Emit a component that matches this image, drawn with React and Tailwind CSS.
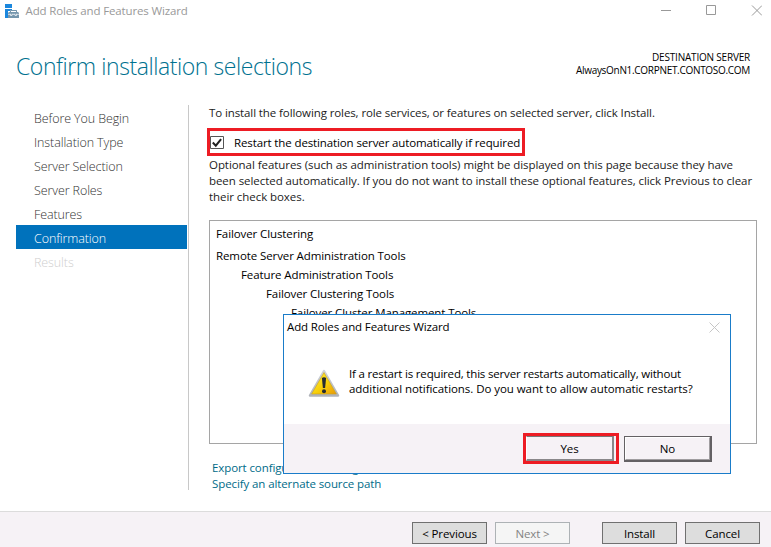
import React from 'react';

const steps = [
  { label: 'Before You Begin', cls: 'text-[#333]' },
  { label: 'Installation Type', cls: 'text-[#333]' },
  { label: 'Server Selection', cls: 'text-[#333]' },
  { label: 'Server Roles', cls: 'text-[#333]' },
  { label: 'Features', cls: 'text-[#333]' },
  { label: 'Confirmation', cls: 'bg-[#0072bc] text-white' },
  { label: 'Results', cls: 'text-[#cfcfcf]' },
];

const features = [
  { label: 'Failover Clustering', cls: 'mb-[3px]' },
  { label: 'Remote Server Administration Tools', cls: '' },
  { label: 'Feature Administration Tools', cls: 'pl-[25px]' },
  { label: 'Failover Clustering Tools', cls: 'pl-[50px]' },
  { label: 'Failover Cluster Management Tools', cls: 'pl-[75px]' },
];

function ServerManagerIcon() {
  return (
    <svg className="shrink-0" width="14" height="14" viewBox="0 0 14 14">
      <path d="M0 0h7v4H0zM0 5h7v1H5v1H3v7H0z" fill="#1b87dd" />
      <path fillRule="evenodd" d="M5 8V6.500L5.500 6h6l.5.500V8h1l1 1v5H3V9l1-1zM6 7v1h5V7z" fill="#7596ad" />
      <path d="M3 10.300h2.500M7 10.300h3M11.500 10.300H14M5.500 9.800v1.700H7V9.800M10 9.800v1.700h1.500V9.800" fill="none" stroke="#fff" strokeWidth="0.700" />
    </svg>
  );
}

function WarningIcon() {
  return (
    <svg width="32" height="29" viewBox="0 0 32 29">
      <defs>
        <linearGradient id="rim" x1="0" y1="0" x2="0" y2="1">
          <stop offset="0" stopColor="#d0d3d9" />
          <stop offset="1" stopColor="#b0b3ba" />
        </linearGradient>
        <linearGradient id="amber" x1="0" y1="0" x2="1" y2="1">
          <stop offset="0" stopColor="#fff04a" />
          <stop offset="0.55" stopColor="#f8d008" />
          <stop offset="1" stopColor="#e8980a" />
        </linearGradient>
      </defs>
      <path d="M16 2 30 26.500H2z" fill="url(#rim)" stroke="url(#rim)" strokeWidth="2.500" strokeLinejoin="round" />
      <path d="M16 3.600 28.400 25H3.600z" fill="url(#amber)" stroke="#c9a21c" strokeWidth="0.600" />
      <path d="M13.900 9q2.100-1.300 4.200 0l-1 10h-2.200z" fill="#252b33" />
      <circle cx="16" cy="22.300" r="2" fill="#252b33" />
    </svg>
  );
}

function WizardButton({ children, cls }) {
  return (
    <button className={`flex h-[22px] w-[75px] items-center justify-center border pt-px leading-4 tracking-[-0.12px] ${cls}`}>
      {children}
    </button>
  );
}

function ConfirmDialog() {
  return (
    <div className="absolute left-[283px] top-[314px] flex h-[160px] w-[448px] flex-col border border-[#1a7cc9] bg-white text-black">
      <div className="flex h-[24px] items-center justify-between pl-[3px] pr-[10px]">
        <span className="whitespace-nowrap tracking-[-0.13px]">Add Roles and Features Wizard</span>
        <svg width="11" height="11" viewBox="0 0 11 11" stroke="#c6c6c6" fill="none">
          <path d="M.5.5l10 10M10.500.5l-10 10" />
        </svg>
      </div>
      <div className="flex grow items-start pl-[24px] pt-[27px]">
        <div className="pt-[3px]"><WarningIcon /></div>
        <div className="whitespace-nowrap pl-[9px] leading-[15px]">
          <div className="tracking-[-0.18px]">If a restart is required, this server restarts automatically, without</div>
          <div className="tracking-[-0.06px]">additional notifications. Do you want to allow automatic restarts?</div>
        </div>
      </div>
      <div className="flex h-[49px] items-start bg-[#f6f2f6] pl-[239px] pt-[9px] tracking-[-0.1px]">
        <div className="h-[31px] w-[96px] border-[3px] border-[#ed1c24] bg-[#f6f2f6]">
          <button className="flex h-[25px] w-[88px] items-center justify-center border-b-2 border-l border-r-2 border-t border-b-[#8a878a] border-l-white border-r-[#8a878a] border-t-[#777] pt-px">Yes</button>
        </div>
        <div className="ml-[5px] mt-[3px] h-[26px] w-[88px] border-b-2 border-l border-r-2 border-t border-[#646164]">
          <button className="flex h-[23px] w-[85px] items-center justify-center border border-b-[#a09da0] border-l-white border-r-[#a09da0] border-t-white pt-px">No</button>
        </div>
      </div>
    </div>
  );
}

export default function App() {
  return (
    <div className="relative flex h-[547px] w-[771px] flex-col overflow-hidden bg-white font-['Open_Sans','Noto_Sans',sans-serif] text-[11.5px] leading-4 text-[#222]">
      <header className="flex h-[22px] shrink-0 items-center justify-between pl-[5px] pr-[9px]">
        <div className="flex items-center gap-[6.5px] text-[#999]">
          <ServerManagerIcon />
          <span className="tracking-[-0.14px]">Add Roles and Features Wizard</span>
        </div>
        <svg width="101" height="12" viewBox="0 0 101 12" fill="none" stroke="#999">
          <path d="M0 5.500h10M45.500.5h9v9h-9zM91 .5l10 10M101 .5l-10 10" />
        </svg>
      </header>

      <div className="flex h-[83px] shrink-0 items-start justify-between pl-[16px] pr-[21px]">
        <h1 className="mt-[28px] whitespace-nowrap text-[23px] font-light leading-[32px] tracking-[-0.43px] text-[#00718f]">Confirm installation selections</h1>
        <div className="mt-[29px] text-right text-[10px] leading-[13px] text-black">
          <div className="tracking-[-0.2px]">DESTINATION SERVER</div>
          <div className="tracking-[-0.3px]">AlwaysOnN1.CORPNET.CONTOSO.COM</div>
        </div>
      </div>

      <div className="flex h-[406px] shrink-0">
        <nav className="ml-[16px] w-[171px] shrink-0 text-[12.5px] tracking-[-0.1px]">
          {steps.map((step) => (
            <div key={step.label} className={`flex h-6 items-center pl-[18px] pt-[3px] font-light ${step.cls}`}>{step.label}</div>
          ))}
        </nav>
        <div className="ml-[1px] h-[385px] w-px shrink-0 bg-[#c8c8c8]" />
        <main className="ml-[18px] w-[550px] tracking-[-0.1px]">
          <p className="whitespace-nowrap pl-[2px]">To install the following roles, role services, or features on selected server, click Install.</p>
          <label className="mt-[7px] flex h-[28px] w-[318px] items-center border-[3px] border-[#ed1c24] text-black">
            <svg className="mt-px shrink-0" width="14" height="14" viewBox="0 0 14 14" fill="none">
              <path d="M.5.5h13v12H.5z" stroke="#555" />
              <path d="M2.800 6.500l3 3.200 5.300-6.500" stroke="#222" strokeWidth="2" />
            </svg>
            <span className="whitespace-nowrap pl-[10px] pt-px tracking-[-0.12px]">Restart the destination server automatically if required</span>
          </label>
          <div className="mt-[1px] whitespace-nowrap pl-[2px] tracking-[-0.06px]">
            <p>Optional features (such as administration tools) might be displayed on this page because they have</p>
            <p>been selected automatically. If you do not want to install these optional features, click Previous to clear</p>
            <p>their check boxes.</p>
          </div>
          <div className="ml-[2px] mt-[15px] h-[224px] w-[548px] whitespace-nowrap border border-[#a5a5a5] pl-[6px] pt-[3px] leading-[19px] text-black">
            {features.map((feature) => (
              <div key={feature.label} className={feature.cls}>{feature.label}</div>
            ))}
          </div>
          <div className="mt-[16px] pl-[5px] text-[#006b88]">
            <a className="block">Export configuration settings</a>
            <a className="block">Specify an alternate source path</a>
          </div>
        </main>
      </div>

      <footer className="flex grow items-start border-t border-[#dcdcdc] bg-[#f6f2f6] pl-[412px] pt-[10px]">
        <WizardButton cls="border-[#707070] bg-[#dddddd] text-black">&lt; Previous</WizardButton>
        <WizardButton cls="ml-[8px] border-[#adb2b5] bg-[#f5f5f5] text-[#838383]">Next &gt;</WizardButton>
        <WizardButton cls="ml-[32px] border-[#707070] bg-[#dddddd] text-black">Install</WizardButton>
        <WizardButton cls="ml-[8px] border-[#707070] bg-[#dddddd] text-black">Cancel</WizardButton>
      </footer>

      <ConfirmDialog />
    </div>
  );
}
